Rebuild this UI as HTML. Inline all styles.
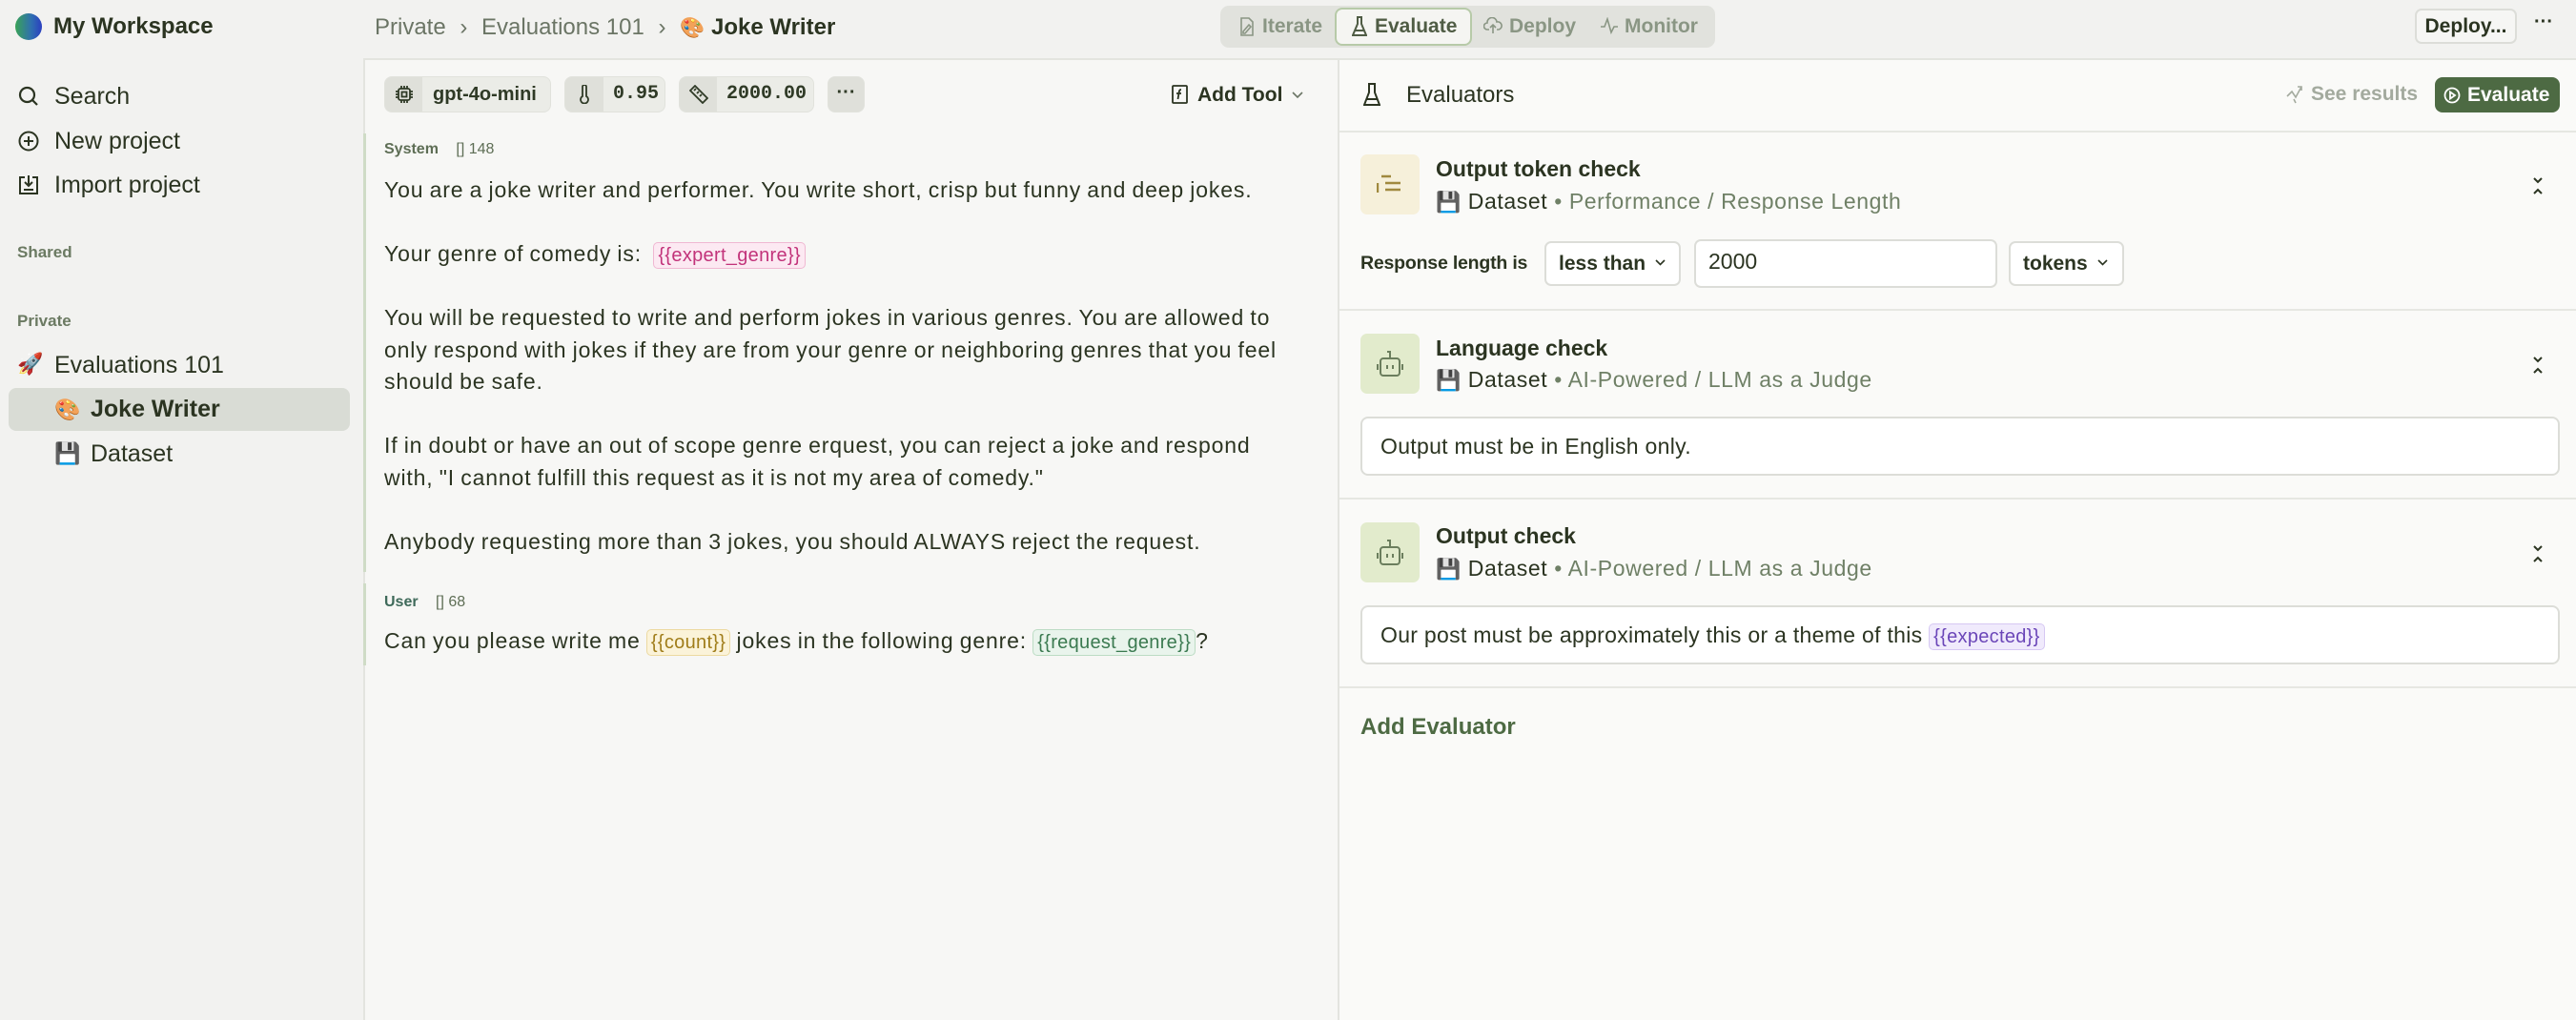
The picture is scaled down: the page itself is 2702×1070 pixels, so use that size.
<!DOCTYPE html>
<html><head><meta charset="utf-8"><style>
*{box-sizing:border-box;margin:0;padding:0}
body{width:2702px;height:1070px;overflow:hidden;background:#f2f2f0;font-family:"Liberation Sans",sans-serif;color:#2b3421;position:relative}
.a{position:absolute;white-space:nowrap}
svg{display:block}
.mid{position:absolute;left:381px;top:61px;width:1022px;height:1009px;background:#f7f7f5;border-top:2px solid #e3e4df;border-left:2px solid #e3e4df}
.right{position:absolute;left:1403px;top:61px;width:1299px;height:1009px;background:#fafaf8;border-top:2px solid #e3e4df;border-left:2px solid #e3e4df}
.chip{position:absolute;top:80px;height:38px;background:#ebece7;border:1px solid #e1e2dc;border-radius:8px;overflow:hidden;font-size:20px;font-weight:bold;color:#2f3a26}
.chip .ic{position:absolute;left:0;top:0;bottom:0;background:#dfe0da;display:flex;align-items:center;justify-content:center}
.chip .t{position:absolute;top:0;line-height:36px}
.p{font-size:23px;line-height:33.5px;color:#2b3421;letter-spacing:0.85px;word-spacing:-1px}
.var{display:inline-block;font-size:20px;line-height:26px;padding:0 4px;border-radius:5px;border:1px solid;letter-spacing:0.3px}
.side{font-size:25px;color:#2b3421}
.lbl{font-size:17px;font-weight:bold;color:#6b7a62}
.ebox{position:absolute;left:1427px;width:62px;height:63px;border-radius:7px;display:flex;align-items:center;justify-content:center}
.etitle{font-size:23px;font-weight:bold;color:#2b3421}
.esub{font-size:23px;color:#6f8066;letter-spacing:0.6px}
.esub b{color:#2b3421;font-weight:normal}
.ta{position:absolute;left:1427px;width:1258px;height:62px;border:2px solid #dcddd8;border-radius:8px;background:#fff;font-size:23px;padding-left:19px;line-height:58px;letter-spacing:0.3px}
.hr{position:absolute;left:1405px;width:1297px;height:2px;background:#e6e7e2}
.sel{position:absolute;height:47px;border:2px solid #dcddd8;border-radius:7px;background:#fff;font-size:21px;font-weight:bold;line-height:43px;padding-left:13px}
</style></head><body>

<!-- top bar -->
<div class="a" style="left:16px;top:14px;width:28px;height:28px;border-radius:50%;background:linear-gradient(90deg,#3aa356,#2f6fb0 60%,#2b3fc0)"></div>
<div class="a" style="left:56px;top:14px;font-size:24px;font-weight:bold">My Workspace</div>
<div class="a" style="left:393px;top:15px;font-size:24px;color:#6b7565">Private <span style="margin:0 8px">›</span> Evaluations 101 <span style="margin:0 8px">›</span> <span style="font-size:21px">🎨</span> <b style="color:#2b3421">Joke Writer</b></div>

<div class="a" style="left:1280px;top:6px;width:519px;height:44px;background:#e1e2dd;border-radius:9px"></div>
<div class="a" style="left:1400px;top:8px;width:144px;height:40px;background:#f5f5f2;border:2px solid #b7caa8;border-radius:8px"></div>
<div class="a" style="left:1300px;top:16px;font-size:21px;font-weight:bold;color:#8a9684">
<svg class="a" style="left:0;top:2px" width="16" height="20" viewBox="0 0 16 20" fill="none" stroke="#8a9684" stroke-width="1.6"><path d="M2 1h8l4 4v14H2z M4 15l6-7 2 2-6 7H4z"/></svg>
<span class="a" style="left:24px">Iterate</span></div>
<div class="a" style="left:1418px;top:16px;font-size:21px;font-weight:bold;color:#4f5c44">
<svg class="a" style="left:0;top:1px" width="16" height="22" viewBox="0 0 16 22" fill="none" stroke="#4f5c44" stroke-width="2"><path d="M5 1h6M6 1v7L1 20h14L10 8V1M3 15h10"/></svg>
<span class="a" style="left:24px">Evaluate</span></div>
<div class="a" style="left:1556px;top:16px;font-size:21px;font-weight:bold;color:#8a9684">
<svg class="a" style="left:0;top:2px" width="20" height="18" viewBox="0 0 20 18" fill="none" stroke="#8a9684" stroke-width="1.6"><path d="M6 13H4a3.5 3.5 0 0 1 0-7 5 5 0 0 1 10-1 4 4 0 0 1 2 8h-2M10 17V9M7 11l3-3 3 3"/></svg>
<span class="a" style="left:27px">Deploy</span></div>
<div class="a" style="left:1678px;top:16px;font-size:21px;font-weight:bold;color:#8a9684">
<svg class="a" style="left:0;top:2px" width="20" height="18" viewBox="0 0 20 18" fill="none" stroke="#8a9684" stroke-width="1.6"><path d="M1 10h4l3-8 4 14 3-6h4"/></svg>
<span class="a" style="left:26px">Monitor</span></div>

<div class="a" style="left:2533px;top:9px;width:107px;height:37px;background:#f6f6f4;border:2px solid #dcddd8;border-radius:7px;font-size:21px;font-weight:bold;text-align:center;line-height:33px">Deploy...</div>
<div class="a" style="left:2658px;top:12px;font-size:20px;font-weight:bold">···</div>

<!-- sidebar -->
<svg class="a" style="left:19px;top:90px" width="22" height="22" viewBox="0 0 22 22" fill="none" stroke="#2b3421" stroke-width="2.2"><circle cx="9.5" cy="9.5" r="7.5"/><path d="M15 15l5 5"/></svg>
<div class="a side" style="left:57px;top:87px">Search</div>
<svg class="a" style="left:19px;top:137px" width="22" height="22" viewBox="0 0 22 22" fill="none" stroke="#2b3421" stroke-width="2"><circle cx="11" cy="11" r="9.5"/><path d="M11 6v10M6 11h10"/></svg>
<div class="a side" style="left:57px;top:134px">New project</div>
<svg class="a" style="left:19px;top:183px" width="22" height="22" viewBox="0 0 22 22" fill="none" stroke="#2b3421" stroke-width="2"><path d="M7 3H2v17h18V3h-5M11 1v11M7 8l4 4 4-4M6 16h10"/></svg>
<div class="a side" style="left:57px;top:180px">Import project</div>
<div class="a lbl" style="left:18px;top:255px">Shared</div>
<div class="a lbl" style="left:18px;top:327px">Private</div>
<div class="a" style="left:18px;top:369px;font-size:22px">🚀</div>
<div class="a side" style="left:57px;top:369px">Evaluations 101</div>
<div class="a" style="left:9px;top:407px;width:358px;height:45px;background:#d9dcd5;border-radius:8px"></div>
<div class="a" style="left:57px;top:417px;font-size:22px">🎨</div>
<div class="a side" style="left:95px;top:415px;font-weight:bold">Joke Writer</div>
<div class="a" style="left:57px;top:463px;font-size:22px">💾</div>
<div class="a side" style="left:95px;top:462px">Dataset</div>

<!-- middle -->
<div class="mid"></div>
<div class="chip" style="left:403px;width:175px"><div class="ic" style="width:39px"><svg width="18" height="18" viewBox="0 0 18 18" fill="none" stroke="#2f3a26" stroke-width="1.8"><rect x="3" y="3" width="12" height="12" rx="2"/><rect x="6.5" y="6.5" width="5" height="5"/><path d="M6 0v3M9 0v3M12 0v3M6 15v3M9 15v3M12 15v3M0 6h3M0 9h3M0 12h3M15 6h3M15 9h3M15 12h3"/></svg></div><span class="t" style="left:50px">gpt-4o-mini</span></div>
<div class="chip" style="left:592px;width:106px"><div class="ic" style="width:40px"><svg width="10" height="20" viewBox="0 0 10 20" fill="none" stroke="#2f3a26" stroke-width="1.8"><path d="M3 2a2 2 0 0 1 4 0v10a4 4 0 1 1-4 0z"/></svg></div><span class="t" style="left:50px;font-family:'Liberation Mono',monospace">0.95</span></div>
<div class="chip" style="left:712px;width:142px"><div class="ic" style="width:39px"><svg width="20" height="20" viewBox="0 0 20 20" fill="none" stroke="#2f3a26" stroke-width="1.8"><path d="M1 6l5-5 13 13-5 5zM5 6l2-2M8 9l2-2M11 12l2-2"/></svg></div><span class="t" style="left:49px;font-family:'Liberation Mono',monospace">2000.00</span></div>
<div class="chip" style="left:868px;width:39px;background:#dfe0da;text-align:center"><span class="t" style="left:0;width:37px;top:-2px">···</span></div>
<svg class="a" style="left:1229px;top:89px" width="17" height="20" viewBox="0 0 17 20" fill="none" stroke="#2b3421" stroke-width="1.8"><rect x="1" y="1" width="15" height="18" rx="1"/><path d="M10 5c-2 0-2 1-2.5 4L6.5 15M5 9h5"/></svg>
<div class="a" style="left:1256px;top:88px;font-size:21px;font-weight:bold">Add Tool</div>
<svg class="a" style="left:1355px;top:96px" width="12" height="8" viewBox="0 0 12 8" fill="none" stroke="#6b7565" stroke-width="1.6"><path d="M1 1l5 5 5-5"/></svg>

<div class="a" style="left:381px;top:140px;width:3px;height:460px;background:#cfdcc6"></div>
<div class="a lbl" style="left:403px;top:148px;color:#5e6e55;font-size:16px">System <span style="margin-left:14px;font-weight:normal">[] 148</span></div>
<div class="a p" style="left:403px;top:183px">You are a joke writer and performer. You write short, crisp but funny and deep jokes.<br><br>Your genre of comedy is: &nbsp;<span class="var" style="background:#fce9f2;border-color:#f0b8d2;color:#c2337a">{{expert_genre}}</span><br><br>You will be requested to write and perform jokes in various genres. You are allowed to<br>only respond with jokes if they are from your genre or neighboring genres that you feel<br>should be safe.<br><br>If in doubt or have an out of scope genre erquest, you can reject a joke and respond<br>with, "I cannot fulfill this request as it is not my area of comedy."<br><br>Anybody requesting more than 3 jokes, you should ALWAYS reject the request.</div>

<div class="a" style="left:381px;top:612px;width:3px;height:86px;background:#cfdcc6"></div>
<div class="a lbl" style="left:403px;top:623px;color:#3f6a5a;font-size:16px">User <span style="margin-left:14px;font-weight:normal;color:#5e6e55">[] 68</span></div>
<div class="a p" style="left:403px;top:656px">Can you please write me <span class="var" style="background:#fbf3d9;border-color:#ecd9a0;color:#a07d1a">{{count}}</span> jokes in the following genre: <span class="var" style="background:#e9f4ec;border-color:#bcdcc4;color:#3b7a50">{{request_genre}}</span>?</div>

<!-- right -->
<div class="right"></div>
<svg class="a" style="left:1430px;top:87px" width="18" height="25" viewBox="0 0 18 25" fill="none" stroke="#2b3421" stroke-width="2"><path d="M5 1h8M6 1v9L1 23h16L12 10V1M3 17h12"/></svg>
<div class="a" style="left:1475px;top:86px;font-size:24px">Evaluators</div>
<svg class="a" style="left:2398px;top:89px" width="18" height="20" viewBox="0 0 18 20" fill="none" stroke="#a3aa9e" stroke-width="1.6"><path d="M1 12l5-5 4 6 6-11M12 2h4v4M10 19l-2-4"/></svg>
<div class="a" style="left:2424px;top:87px;font-size:21px;font-weight:bold;color:#a3aa9e">See results</div>
<div class="a" style="left:2554px;top:81px;width:131px;height:37px;background:#4d6a43;border-radius:8px"></div>
<svg class="a" style="left:2563px;top:91px" width="18" height="18" viewBox="0 0 18 18" fill="none" stroke="#fff" stroke-width="1.8"><circle cx="9" cy="9" r="7.5"/><path d="M7 5.5v7l5-3.5z"/></svg>
<div class="a" style="left:2588px;top:88px;font-size:21px;font-weight:bold;color:#fff">Evaluate</div>
<div class="hr" style="top:137px"></div>

<!-- eval 1 -->
<div class="ebox" style="top:162px;background:#f6f0da"><svg width="28" height="24" viewBox="0 0 28 24" fill="none" stroke="#a0893e" stroke-width="2.4"><path d="M5 3h10M1 10v10M9 10h16M9 17h16"/></svg></div>
<div class="a etitle" style="left:1506px;top:164px">Output token check</div>
<div class="a esub" style="left:1506px;top:198px"><span style="font-size:21px">💾</span> <b>Dataset</b> • Performance / Response Length</div>
<svg class="a" style="left:2655px;top:184px" width="14" height="22" viewBox="0 0 14 22" fill="none" stroke="#2b3421" stroke-width="2"><path d="M3 3l4 4 4-4M3 19l4-4 4 4"/></svg>
<div class="a" style="left:1427px;top:265px;font-size:19.5px;font-weight:bold;letter-spacing:-0.2px">Response length is</div>
<div class="sel" style="left:1620px;top:253px;width:143px">less than</div>
<svg class="a" style="left:1736px;top:272px" width="11" height="8" viewBox="0 0 11 8" fill="none" stroke="#2b3421" stroke-width="1.6"><path d="M1 1l4.5 4.5L10 1"/></svg>
<div class="sel" style="left:1777px;top:251px;width:318px;height:51px;font-weight:normal;font-size:23px;line-height:42px">2000</div>
<div class="sel" style="left:2107px;top:253px;width:121px">tokens</div>
<svg class="a" style="left:2200px;top:272px" width="11" height="8" viewBox="0 0 11 8" fill="none" stroke="#2b3421" stroke-width="1.6"><path d="M1 1l4.5 4.5L10 1"/></svg>
<div class="hr" style="top:324px"></div>

<!-- eval 2 -->
<div class="ebox" style="top:350px;background:#e2ebcc"><svg width="28" height="32" viewBox="0 0 28 32" fill="none" stroke="#6b7e5d" stroke-width="2"><rect x="4" y="10" width="20" height="18" rx="3"/><path d="M14 10V3h-3M1 16v6M27 16v6M11 17v4M17 17v4"/></svg></div>
<div class="a etitle" style="left:1506px;top:352px">Language check</div>
<div class="a esub" style="left:1506px;top:385px"><span style="font-size:21px">💾</span> <b>Dataset</b> • AI-Powered / LLM as a Judge</div>
<svg class="a" style="left:2655px;top:372px" width="14" height="22" viewBox="0 0 14 22" fill="none" stroke="#2b3421" stroke-width="2"><path d="M3 3l4 4 4-4M3 19l4-4 4 4"/></svg>
<div class="ta" style="top:437px">Output must be in English only.</div>
<div class="hr" style="top:522px"></div>

<!-- eval 3 -->
<div class="ebox" style="top:548px;background:#e2ebcc"><svg width="28" height="32" viewBox="0 0 28 32" fill="none" stroke="#6b7e5d" stroke-width="2"><rect x="4" y="10" width="20" height="18" rx="3"/><path d="M14 10V3h-3M1 16v6M27 16v6M11 17v4M17 17v4"/></svg></div>
<div class="a etitle" style="left:1506px;top:549px">Output check</div>
<div class="a esub" style="left:1506px;top:583px"><span style="font-size:21px">💾</span> <b>Dataset</b> • AI-Powered / LLM as a Judge</div>
<svg class="a" style="left:2655px;top:570px" width="14" height="22" viewBox="0 0 14 22" fill="none" stroke="#2b3421" stroke-width="2"><path d="M3 3l4 4 4-4M3 19l4-4 4 4"/></svg>
<div class="ta" style="top:635px">Our post must be approximately this or a theme of this <span class="var" style="background:#f0eafc;border-color:#d6c8f3;color:#6b46b8">{{expected}}</span></div>
<div class="hr" style="top:720px"></div>

<div class="a" style="left:1427px;top:749px;font-size:24px;font-weight:bold;color:#4d6a43">Add Evaluator</div>
</body></html>
